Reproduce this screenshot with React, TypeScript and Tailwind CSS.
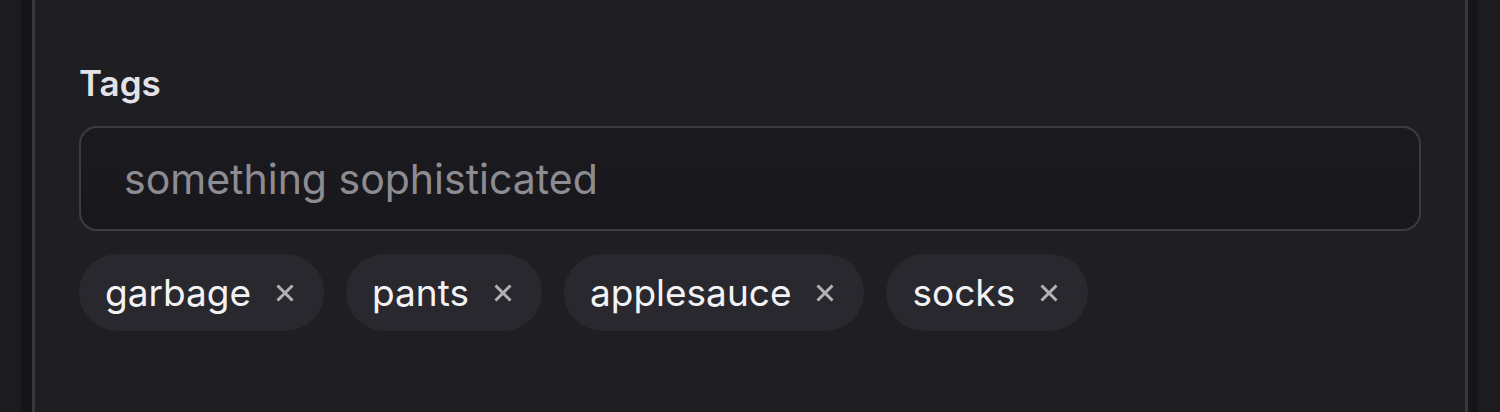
import { useState } from "react";

const initialTags = ["garbage", "pants", "applesauce", "socks"];

function CloseIcon() {
  return (
    <svg width="18" height="18" viewBox="0 0 18 18" fill="none" className="shrink-0">
      <path d="M1.5 1.5L16.5 16.5M16.5 1.5L1.5 16.5" stroke="currentColor" strokeWidth="3" />
    </svg>
  );
}

export default function App() {
  const [tags, setTags] = useState(initialTags);
  const [value, setValue] = useState("");

  return (
    <div
      className="flex h-[412px] w-[1500px] bg-[#1c1c1f]"
      style={{ fontFamily: "Inter, 'Noto Sans', sans-serif" }}
    >
      <div className="w-[21px] shrink-0 bg-[#1c1c1f]" />
      <div className="w-[11px] shrink-0 bg-[#151517]" />

      <div className="flex min-w-0 flex-1 flex-col border-x-[3px] border-[#38383c] bg-[#1f1e23] px-[44px] pt-[61px]">
        <label className="block text-[35px] font-semibold leading-[44px] text-[#e3e3e7]">Tags</label>

        <input
          value={value}
          onChange={(e) => setValue(e.target.value)}
          placeholder="something sophisticated"
          spellCheck={false}
          className="mt-[21px] h-[105px] w-full rounded-[18px] border-2 border-[#3c3b41] bg-gradient-to-b from-[#1b1a1f] to-[#18171c] px-[43px] text-[41px] text-[#f2f2f4] outline-none placeholder:text-[#8d8c93]"
        />

        <div className="mt-[23px] flex flex-wrap gap-[22px]">
          {tags.map((t) => (
            <div
              key={t}
              className="flex h-[77px] items-center gap-[25px] rounded-full bg-[#29282e] pl-[26px] pr-[30px] text-[37px] text-[#f3f3f5]"
            >
              <span className="leading-none">{t}</span>
              <button
                onClick={() => setTags((v) => v.filter((x) => x !== t))}
                className="flex items-center text-[#b3b3b7]"
              >
                <CloseIcon />
              </button>
            </div>
          ))}
        </div>
      </div>

      <div className="w-[10px] shrink-0 bg-[#151517]" />
      <div className="w-[22px] shrink-0 bg-[#1c1c1f]" />
    </div>
  );
}
